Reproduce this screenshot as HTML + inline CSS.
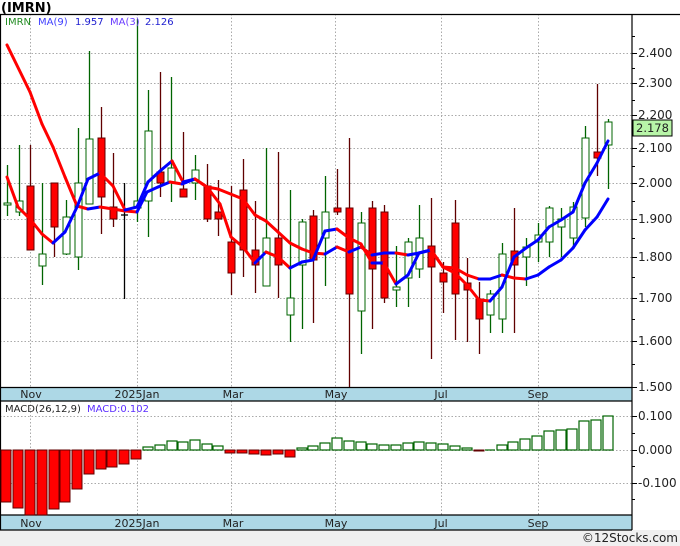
<!DOCTYPE html>
<html><head><meta charset="utf-8"><style>
html,body{margin:0;padding:0;background:#fff;width:680px;height:546px;overflow:hidden}
svg{display:block;font-family:"DejaVu Sans","Liberation Sans",sans-serif}
</style></head><body>
<svg id="s" width="680" height="546" viewBox="0 0 680 546" xmlns="http://www.w3.org/2000/svg">
<rect x="0" y="0" width="680" height="546" fill="#fff"/>
<rect x="0" y="530" width="680" height="16" fill="#f0f0f0"/>
<text x="1" y="12" font-size="13" font-weight="bold" fill="#000">(IMRN)</text>
<g id="grid" stroke="#aaa" stroke-dasharray="1.5,2" stroke-width="1"></g>
<rect x="0" y="387" width="632" height="14" fill="#add8e6"/>
<rect x="0" y="515" width="632" height="15" fill="#add8e6"/>
<g stroke="#000" stroke-width="1.2" fill="none">
<line x1="0" y1="14.5" x2="680" y2="14.5"/>
<line x1="0.5" y1="14" x2="0.5" y2="530"/>
<line x1="632" y1="14" x2="632" y2="530"/>
<line x1="0" y1="387.5" x2="632" y2="387.5"/>
<line x1="0" y1="401" x2="632" y2="401"/>
<line x1="0" y1="515" x2="632" y2="515"/>
<line x1="0" y1="530" x2="632" y2="530"/>
</g>
<g id="cd"></g>
<g id="ma" fill="none" stroke-width="3" stroke-linejoin="round" stroke-linecap="round"></g>
<g id="macd"></g>
<g id="ticks" stroke="#000"></g>
<g font-size="12" fill="#222">
<text x="638" y="57">2.400</text><text x="638" y="87">2.300</text><text x="638" y="119">2.200</text>
<text x="638" y="152">2.100</text><text x="638" y="187">2.000</text><text x="638" y="223">1.900</text>
<text x="638" y="261">1.800</text><text x="638" y="302">1.700</text><text x="638" y="345">1.600</text>
<text x="638" y="391">1.500</text>
<text x="638" y="420">0.100</text><text x="638" y="454">0.000</text><text x="638" y="487">-0.100</text>
</g>
<rect x="633" y="120" width="39" height="16" fill="#b8f5a8" stroke="#000"/>
<text x="636" y="132" font-size="11.5" fill="#222">2.178</text>
<g font-size="11" fill="#222" text-anchor="middle">
<text x="31" y="398">Nov</text><text x="137" y="398">2025Jan</text><text x="233" y="398">Mar</text>
<text x="336" y="398">May</text><text x="441" y="398">Jul</text><text x="538" y="398">Sep</text>
<text x="31" y="527">Nov</text><text x="137" y="527">2025Jan</text><text x="233" y="527">Mar</text>
<text x="336" y="527">May</text><text x="441" y="527">Jul</text><text x="538" y="527">Sep</text>
</g>
<text x="5" y="25" font-size="10" fill="#228b22">IMRN</text>
<text x="38" y="25" font-size="10" fill="#4040ff">MA(9)</text>
<text x="75" y="25" font-size="10" fill="#2020d0">1.957</text>
<text x="110" y="25" font-size="10" fill="#6a3cff">MA(3)</text>
<text x="145" y="25" font-size="10" fill="#2020d0">2.126</text>
<text x="5" y="412" font-size="10" fill="#222">MACD(26,12,9)</text>
<text x="87" y="412" font-size="10" fill="#5a2cff">MACD:0.102</text>
<text x="678" y="542" font-size="12" fill="#222" text-anchor="end">©12Stocks.com</text>
</svg>
<script>
var NS="http://www.w3.org/2000/svg";
function el(p,t,a){var e=document.createElementNS(NS,t);for(var k in a)e.setAttribute(k,a[k]);p.appendChild(e);return e;}
var g=document.getElementById('grid');
[53,83,115,148,183,219,257,298,341,416,450,483].forEach(function(y){el(g,'line',{x1:0,y1:y+.5,x2:632,y2:y+.5});});
[30,137,231,335,441,538].forEach(function(x){el(g,'line',{x1:x+.5,y1:14,x2:x+.5,y2:387});el(g,'line',{x1:x+.5,y1:401,x2:x+.5,y2:515});});
var t=document.getElementById('ticks');
[53,83,115,148,183,219,257,298,341,387,416,450,483].forEach(function(y){el(t,'line',{x1:632,y1:y+.5,x2:637,y2:y+.5});});
[36,68,100,132,166,201,238,277,319,364,433,466,499].forEach(function(y){el(t,'line',{x1:632,y1:y+.5,x2:635,y2:y+.5});});
var C=[[7,165,216,203,205,'g'],[19,145,216,201,212,'g'],[30,145,250,186,250,'r'],[42,183,285,254,266,'g'],[54,183,257,183,227,'r'],[66,200,255,217,254,'g'],[78,128,270,183,257,'g'],[89,51,204,139,204,'g'],[101,107,234,138,197,'r'],[113,153,227,207,219,'r'],[124,183,299,214,216,'k'],[137,19,222,201,208,'g'],[148,90,237,131,201,'g'],[160,72,197,172,183,'r'],[171,77,202,168,183,'g'],[183,132,197,189,197,'r'],[195,155,200,170,183,'g'],[207,164,222,186,219,'r'],[218,180,236,212,219,'r'],[231,186,295,242,273,'r'],[243,159,277,190,250,'r'],[255,201,293,250,265,'r'],[266,148,286,238,286,'g'],[278,152,298,238,265,'r'],[290,190,342,298,315,'g'],[302,219,329,222,265,'g'],[313,210,323,216,260,'r'],[325,176,286,212,238,'g'],[337,169,215,208,212,'r'],[349,138,387,208,294,'r'],[361,212,354,223,311,'g'],[372,201,329,208,269,'r'],[384,205,303,212,298,'r'],[396,246,307,287,290,'g'],[408,238,307,242,278,'g'],[419,205,278,238,269,'g'],[431,198,359,246,267,'r'],[443,262,313,273,282,'r'],[455,200,340,223,294,'r'],[467,258,342,283,290,'r'],[479,282,354,299,319,'r'],[490,290,333,294,315,'g'],[502,243,333,254,319,'g'],[514,208,333,251,265,'r'],[526,238,286,247,257,'g'],[538,223,262,235,242,'g'],[549,206,257,208,242,'g'],[561,208,257,219,227,'g'],[573,202,247,207,238,'g'],[585,126,227,138,218,'g'],[597,84,176,152,158,'r'],[608,119,189,122,145,'g']];
var cd=document.getElementById('cd');
C.forEach(function(c){var x=c[0],col=c[5]=='g'?'#006400':(c[5]=='r'?'#600000':'#000');
el(cd,'line',{x1:x+.5,y1:c[1],x2:x+.5,y2:c[2],stroke:col,'stroke-width':1.3});
if(c[5]=='k'){el(cd,'line',{x1:x-3,y1:c[3]+1,x2:x+4,y2:c[3]+1,stroke:'#000','stroke-width':1.3});return;}
el(cd,'rect',{x:x-3,y:c[3],width:7,height:Math.max(c[4]-c[3],2),fill:c[5]=='g'?'#fff':'#f00',stroke:c[5]=='g'?'#006400':'#600000','stroke-width':1});});
var ma=document.getElementById('ma');
function line(P){for(var i=1;i<P.length;i++){var a=P[i-1],b=P[i];el(ma,'line',{x1:a[0],y1:a[1],x2:b[0],y2:b[1],stroke:b[1]>a[1]+0.5?'#ff0000':'#0000ff','stroke-width':3,'stroke-linecap':'round'});}}
line([[7,45],[30,92],[42,124],[53,147],[65,177],[77,206],[88,209],[100,207],[113,209],[125,211],[137,212],[147,192],[158,187],[170,182],[182,184],[195,179],[207,187],[218,189],[243,199],[255,215],[266,221],[278,232],[290,243],[302,249],[313,253],[325,254],[337,247],[349,252],[361,247],[372,255],[384,253],[396,253],[408,255],[419,253],[431,250],[443,267],[455,268],[467,275],[479,279],[490,279],[502,275],[514,278],[526,279],[538,275],[549,267],[561,260],[573,248],[585,230],[597,217],[608,199]]);
line([[7,177],[18,207],[30,219],[42,234],[53,243],[65,232],[77,207],[88,179],[100,173],[113,186],[125,210],[137,207],[148,182],[160,171],[172,161],[183,182],[195,179],[207,187],[220,204],[231,237],[243,247],[255,263],[266,252],[278,257],[290,268],[302,262],[313,260],[325,231],[337,229],[349,238],[361,244],[372,263],[384,263],[396,284],[408,275],[419,253],[431,250],[443,267],[455,273],[467,285],[479,300],[490,301],[502,287],[514,257],[526,248],[538,240],[549,227],[561,220],[573,212],[585,183],[597,163],[608,141]]);
var M=[[6,502],[18,508],[30,515],[42,515],[54,509],[65,502],[77,489],[89,474],[101,469],[112,467],[124,464],[136,459],[148,447],[160,445],[172,441],[183,442],[195,440],[207,444],[218,446],[230,453],[242,453],[254,454],[266,455],[278,454],[290,457],[302,448],[313,446],[325,443],[337,438],[349,441],[361,442],[372,444],[384,445],[396,445],[408,443],[419,442],[431,443],[443,444],[455,446],[467,448],[479,451],[490,450],[502,445],[513,442],[525,439],[537,436],[549,431],[561,430],[572,429],[584,421],[596,420],[608,416]];
var mg=document.getElementById('macd');
M.forEach(function(m){var x=m[0],y=m[1];if(y>450){el(mg,'rect',{x:x-5,y:450,width:10,height:y-450,fill:'#f00',stroke:'#600000','stroke-width':1});}
else if(y<450){el(mg,'rect',{x:x-5,y:y,width:10,height:450-y,fill:'#fff',stroke:'#006400','stroke-width':1.2});}
else{el(mg,'line',{x1:x-5,y1:450,x2:x+5,y2:450,stroke:'#006400','stroke-width':1.2});}});
</script>
</body></html>
